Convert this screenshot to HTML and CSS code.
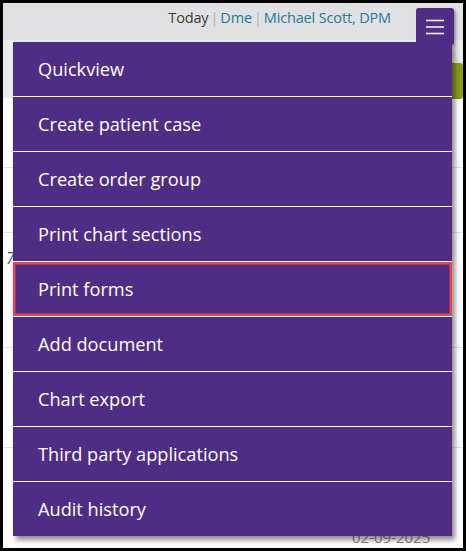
FILE: index.html
```html
<!DOCTYPE html>
<html>
<head>
<meta charset="utf-8">
<link rel="stylesheet" href="styles.css">
</head>
<body>
<div class="frame">
  <div class="topbar">
    <div class="user">
      <span class="today">Today</span><span class="sep">|</span><span class="link">Dme</span><span class="sep">|</span><span class="link">Michael Scott, DPM</span>
    </div>
  </div>
  <div class="content">
    <div class="row r1"></div>
    <div class="row r2"></div>
    <div class="row r3"></div>
    <div class="row r4"><span class="seven">7</span></div>
    <div class="row r5"></div>
    <div class="row r6"><span class="date">02-09-2025</span></div>
  </div>
  <div class="green-btn"></div>
  <button class="hamburger" aria-label="Menu">
    <svg width="18" height="16" viewBox="0 0 18 16"><g stroke="#f3eefa" stroke-width="1.6"><line x1="0" y1="1.5" x2="18" y2="1.5"/><line x1="0" y1="8" x2="18" y2="8"/><line x1="0" y1="14.5" x2="18" y2="14.5"/></g></svg>
  </button>
  <ul class="menu">
    <li class="item">Quickview</li>
    <li class="item">Create patient case</li>
    <li class="item">Create order group</li>
    <li class="item">Print chart sections</li>
    <li class="item active">Print forms</li>
    <li class="item">Add document</li>
    <li class="item">Chart export</li>
    <li class="item">Third party applications</li>
    <li class="item">Audit history</li>
  </ul>
</div>
</body>
</html>
```
FILE: styles.css
```css
* { box-sizing: border-box; }
html, body { margin: 0; padding: 0; }
body { width: 466px; height: 551px; background: #000; font-family: "Segoe UI", "Open Sans", "Noto Sans", sans-serif; }
.frame {
  position: relative;
  width: 466px;
  height: 551px;
  border: 3px solid #000;
  background: #fff;
  overflow: hidden;
  display: flex;
  flex-direction: column;
}
.topbar {
  height: 37px;
  background: #e1e1e3;
  display: flex;
  justify-content: flex-end;
  padding: 3px 72px 0 0;
}
.user { font-size: 14.5px; line-height: 24px; color: #3a3a3a; letter-spacing: -0.15px; }
.user .sep { color: #b0b0b0; margin: 0 2px; }
.user .link { color: #1f7a97; }
.content { flex: 1; display: flex; flex-direction: column; }
.row { border-bottom: 1px solid #e3e3e3; position: relative; }
.r1 { height: 58px; background: #ececec; }
.r2 { height: 70px; }
.r3 { height: 65px; }
.r4 { height: 115px; }
.r5 { height: 100px; }
.r6 { flex: 1; border-bottom: none; }
.seven { position: absolute; left: 3px; top: 14px; font-size: 16px; color: #555; font-style: italic; }
.date { position: absolute; left: 349px; bottom: 1px; font-size: 15px; color: #888; }
.green-btn {
  position: absolute; left: 440px; top: 60px; width: 20px; height: 36px;
  background: #8a9a1e; border-radius: 3px;
}
.hamburger {
  position: absolute; left: 413px; top: 5px; width: 38px; height: 37px;
  background: #4f2d84; border: none; border-radius: 3px; padding: 0;
  display: flex; align-items: center; justify-content: center;
  box-shadow: 2px 2px 3px rgba(0,0,0,0.35);
}
.menu {
  position: absolute; left: 10px; top: 39px; width: 439px;
  margin: 0; padding: 0; list-style: none;
  background: #502d85;
  box-shadow: 3px 4px 5px rgba(0,0,0,0.45);
}
.item {
  height: 55px;
  border-top: 1px solid #fff;
  color: #fff;
  font-size: 18.2px;
  padding-left: 25px;
  display: flex;
  align-items: center;
}
.item:first-child { border-top: none; height: 54px; }
.item.active { box-shadow: inset 0 0 0 2.5px #e8434f; }
```
